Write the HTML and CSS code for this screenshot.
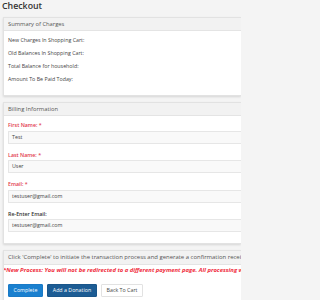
FILE: index.html
```html
<!DOCTYPE html>
<html>
<head>
<meta charset="utf-8">
<link rel="stylesheet" href="styles.css">
</head>
<body>
<div class="page">
  <h1 class="title">Checkout</h1>
  <section class="panel">
    <div class="panel-head">Summary of Charges</div>
    <div class="panel-body summary">
      <div class="row">New Charges In Shopping Cart:</div>
      <div class="row">Old Balances In Shopping Cart:</div>
      <div class="row">Total Balance for household:</div>
      <div class="row">Amount To Be Paid Today:</div>
    </div>
  </section>
  <section class="panel">
    <div class="panel-head">Billing Information</div>
    <div class="panel-body billing">
      <div class="field">
        <label class="lbl req">First Name: *</label>
        <div class="input">Test</div>
      </div>
      <div class="field">
        <label class="lbl req">Last Name: *</label>
        <div class="input">User</div>
      </div>
      <div class="field">
        <label class="lbl req">Email: *</label>
        <div class="input">testuser@gmail.com</div>
      </div>
      <div class="field">
        <label class="lbl">Re-Enter Email:</label>
        <div class="input">testuser@gmail.com</div>
      </div>
    </div>
  </section>
  <section class="panel last">
    <div class="panel-head tall">Click 'Complete' to initiate the transaction process and generate a confirmation receipt.</div>
    <div class="notice">*New Process: You will not be redirected to a different payment page. All processing will be done on this page.</div>
    <div class="actions">
      <button class="btn primary">Complete</button>
      <button class="btn dark">Add a Donation</button>
      <button class="btn plain">Back To Cart</button>
    </div>
  </section>
</div>
</body>
</html>
```
FILE: styles.css
```css
html, body {
  margin: 0;
  padding: 0;
  background: #f4f4f4;
}
body {
  font-family: "Open Sans", "DejaVu Sans", sans-serif;
  color: #444;
}
.page {
  width: 241px;
  height: 300px;
  overflow: hidden;
  box-sizing: border-box;
  padding-left: 3px;
}
.title {
  margin: 0 0 0 -1px;
  padding-top: 1px;
  height: 16px;
  font-size: 8.8px;
  line-height: 11px;
  font-weight: 600;
  color: #333;
}
.panel {
  background: #fff;
  border: 1px solid #e2e2e2;
  border-right: 0;
  box-shadow: 0 1px 2px rgba(0,0,0,0.12);
  margin-bottom: 6px;
  overflow: hidden;
}
.panel-head {
  background: #f2f2f2;
  border-bottom: 1px solid #e4e4e4;
  height: 12px;
  line-height: 12px;
  font-size: 5.8px;
  color: #555;
  padding-left: 4px;
  white-space: nowrap;
  overflow: hidden;
}
.panel-head.tall {
  height: 13px;
  line-height: 13px;
  font-size: 5.95px;
}
.summary {
  padding: 3px 4px 9px;
  height: 52px;
}
.row {
  font-size: 5.3px;
  line-height: 13px;
  color: #444;
}
.billing {
  padding: 6px 0 11px 4px;
}
.field {
  margin-bottom: 8px;
}
.field:last-child {
  margin-bottom: 0;
}
.lbl {
  display: block;
  font-size: 5.3px;
  font-weight: 600;
  line-height: 7px;
  height: 7px;
  color: #333;
  margin-bottom: 1.5px;
}
.lbl.req {
  color: #e2394b;
}
.input {
  box-sizing: border-box;
  height: 13px;
  line-height: 11px;
  border: 1px solid #e6e6e6;
  border-right: 0;
  border-radius: 1px 0 0 1px;
  background: #f9f9f9;
  font-size: 5.3px;
  color: #444;
  padding-left: 3px;
}
.notice {
  margin-left: -1px;
  margin-top: 1px;
  height: 8px;
  font-size: 5.9px;
  line-height: 8px;
  font-weight: 700;
  font-style: italic;
  color: #f02c3c;
  white-space: nowrap;
  overflow: hidden;
}
.actions {
  display: flex;
  gap: 4px;
  padding: 9.5px 4px 10px;
}
.btn {
  box-sizing: border-box;
  font-family: inherit;
  font-size: 5.3px;
  height: 13px;
  line-height: 11px;
  padding: 0;
  border-radius: 1px;
  border: 1px solid transparent;
  margin: 0;
}
.btn.primary {
  background: #1a80cf;
  border-color: #1a7ac6;
  color: #fff;
  width: 35px;
}
.btn.dark {
  background: #1c5c94;
  border-color: #1a568a;
  color: #fff;
  width: 50px;
}
.btn.plain {
  background: #fff;
  border-color: #e2e2e2;
  color: #444;
  width: 42px;
}
```
